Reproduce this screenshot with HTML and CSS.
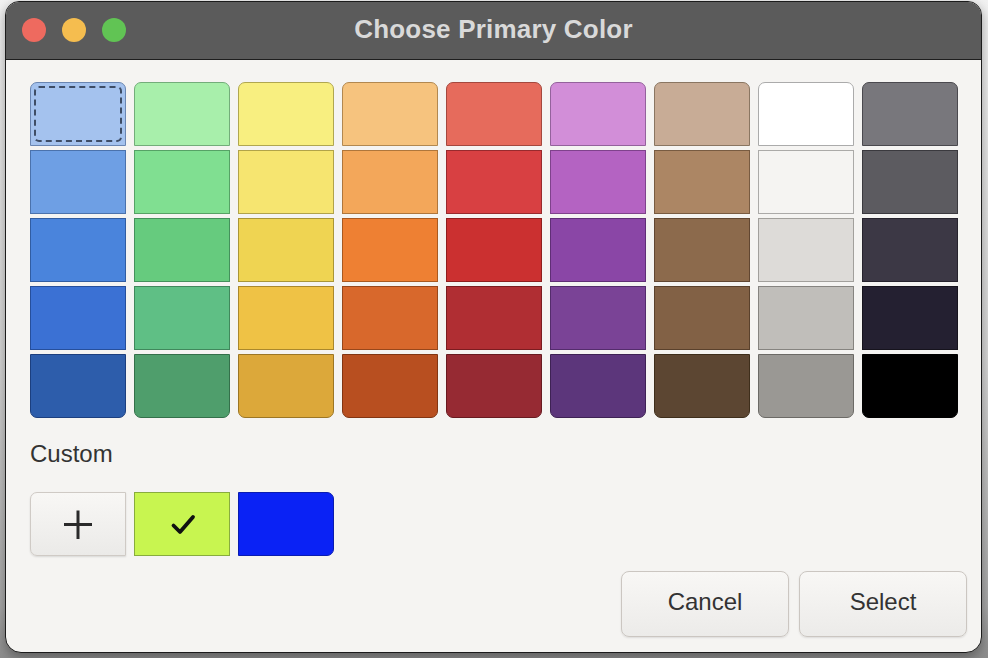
FILE: index.html
```html
<!DOCTYPE html>
<html>
<head>
<meta charset="utf-8">
<link rel="stylesheet" href="styles.css">
</head>
<body>
<div class="window">
  <div class="titlebar">
    <div class="lights">
      <span class="light red"></span>
      <span class="light yellow"></span>
      <span class="light green"></span>
    </div>
    <div class="title">Choose Primary Color</div>
  </div>
  <div class="content">
    <div class="grid">
      <div class="sw focused" style="--c:#a4c2ee;--b:#6a86b2"><span class="focus"></span></div>
      <div class="sw" style="--c:#a8efab;--b:#73ad7a"></div>
      <div class="sw" style="--c:#f8ef80;--b:#b0a750"></div>
      <div class="sw" style="--c:#f6c37e;--b:#b28850"></div>
      <div class="sw" style="--c:#e66b5c;--b:#a4483e"></div>
      <div class="sw" style="--c:#d28ed8;--b:#94629c"></div>
      <div class="sw" style="--c:#c8ac96;--b:#8a7662"></div>
      <div class="sw" style="--c:#ffffff;--b:#ababab"></div>
      <div class="sw" style="--c:#78777c;--b:#4a494e"></div>

      <div class="sw" style="--c:#6e9fe4;--b:#4b72ac"></div>
      <div class="sw" style="--c:#80df91;--b:#56a266"></div>
      <div class="sw" style="--c:#f6e570;--b:#b1a349"></div>
      <div class="sw" style="--c:#f3a75a;--b:#af763b"></div>
      <div class="sw" style="--c:#d84042;--b:#982a2d"></div>
      <div class="sw" style="--c:#b463c2;--b:#7f428c"></div>
      <div class="sw" style="--c:#ac8664;--b:#785b41"></div>
      <div class="sw" style="--c:#f5f4f2;--b:#abaaa8"></div>
      <div class="sw" style="--c:#5c5b60;--b:#3a393e"></div>

      <div class="sw" style="--c:#4a84dc;--b:#315da2"></div>
      <div class="sw" style="--c:#66cb7e;--b:#44915c"></div>
      <div class="sw" style="--c:#efd452;--b:#a99636"></div>
      <div class="sw" style="--c:#ee8033;--b:#a95920"></div>
      <div class="sw" style="--c:#cb3030;--b:#8f1e1e"></div>
      <div class="sw" style="--c:#8a46a6;--b:#602e76"></div>
      <div class="sw" style="--c:#8c6a4c;--b:#614631"></div>
      <div class="sw" style="--c:#dddbd8;--b:#a2a09c"></div>
      <div class="sw" style="--c:#3c3845;--b:#26232d"></div>

      <div class="sw" style="--c:#3b71d4;--b:#264f9c"></div>
      <div class="sw" style="--c:#5fbf85;--b:#40885c"></div>
      <div class="sw" style="--c:#efc245;--b:#aa882c"></div>
      <div class="sw" style="--c:#d8682c;--b:#98471b"></div>
      <div class="sw" style="--c:#b02e33;--b:#7b1c20"></div>
      <div class="sw" style="--c:#7a4396;--b:#542c6c"></div>
      <div class="sw" style="--c:#826145;--b:#5a412c"></div>
      <div class="sw" style="--c:#c0beba;--b:#868480"></div>
      <div class="sw" style="--c:#242031;--b:#16131d"></div>

      <div class="sw" style="--c:#2d5dab;--b:#1c3f7f"></div>
      <div class="sw" style="--c:#4f9e6c;--b:#34704a"></div>
      <div class="sw" style="--c:#dca83a;--b:#9c7624"></div>
      <div class="sw" style="--c:#b84f20;--b:#823512"></div>
      <div class="sw" style="--c:#962a33;--b:#681a20"></div>
      <div class="sw" style="--c:#5c367b;--b:#3e2254"></div>
      <div class="sw" style="--c:#5c4632;--b:#3e2e1b"></div>
      <div class="sw" style="--c:#9a9894;--b:#6c6a66"></div>
      <div class="sw" style="--c:#000000;--b:#000000"></div>
    </div>

    <div class="custom-label">Custom</div>

    <div class="custom-row">
      <div class="add">
        <svg width="30" height="30" viewBox="0 0 30 30"><path d="M15 1.5V30M1 15.5H29" stroke="#2a2a2a" stroke-width="3" fill="none"/></svg>
      </div>
      <div class="csw lime">
        <svg width="26" height="26" viewBox="0 0 26 26"><path d="M3.5 14.5L10 21L23 6" stroke="#111" stroke-width="3.8" fill="none" stroke-linecap="round" stroke-linejoin="round"/></svg>
      </div>
      <div class="csw blue"></div>
    </div>

    <div class="actions">
      <button class="btn">Cancel</button>
      <button class="btn">Select</button>
    </div>
  </div>
</div>
</body>
</html>
```

FILE: styles.css
```css
html, body {
  margin: 0;
  padding: 0;
}
body {
  width: 988px;
  height: 658px;
  overflow: hidden;
  background: linear-gradient(180deg, #f2f2f2 0%, #d6d6d6 55%, #a8a8a8 92%, #8c8c8c 100%);
  font-family: "Liberation Sans", Arial, sans-serif;
  padding-top: 1px;
  box-sizing: border-box;
}
.window {
  margin-left: 5px;
  width: 977px;
  height: 652px;
  box-sizing: border-box;
  border: 1px solid #1c1c1c;
  border-radius: 14px 14px 16px 16px;
  overflow: hidden;
  background: #f5f4f2;
  display: flex;
  flex-direction: column;
  box-shadow: 0 4px 12px rgba(0,0,0,0.35);
}
.titlebar {
  height: 57px;
  flex: none;
  background: #5b5b5b;
  border-bottom: 1px solid #1e1e1e;
  display: flex;
  align-items: center;
  justify-content: center;
  position: relative;
}
.lights {
  position: absolute;
  left: 16px;
  top: 16px;
  display: flex;
  gap: 16px;
}
.light {
  width: 24px;
  height: 24px;
  border-radius: 50%;
  display: block;
}
.red { background: #ee6a5f; }
.yellow { background: #f5bd4f; }
.green { background: #61c454; }
.title {
  color: #d9d9d9;
  font-weight: bold;
  font-size: 26px;
  letter-spacing: 0.2px;
  margin-top: -3px;
}
.content {
  flex: 1;
  display: flex;
  flex-direction: column;
  padding: 22px 14px 0 24px;
}
.grid {
  display: grid;
  grid-template-columns: repeat(9, 96px);
  grid-auto-rows: 64px;
  column-gap: 8px;
  row-gap: 4px;
}
.sw {
  background: var(--c);
  border: 1px solid var(--b);
  box-sizing: border-box;
  position: relative;
}
.sw:nth-child(-n+9) {
  border-radius: 7px 7px 0 0;
}
.sw:nth-last-child(-n+9) {
  border-radius: 0 0 7px 7px;
}
.focus {
  position: absolute;
  left: 3px;
  top: 3px;
  right: 3px;
  bottom: 3px;
  border: 2px dashed #3e4d66;
  border-radius: 5px;
}
.custom-label {
  margin-top: 22px;
  font-size: 24px;
  line-height: 28px;
  color: #333;
}
.custom-row {
  margin-top: 24px;
  display: flex;
  gap: 8px;
  height: 64px;
}
.add, .csw {
  width: 96px;
  height: 64px;
  box-sizing: border-box;
  display: flex;
  align-items: center;
  justify-content: center;
}
.add {
  background: linear-gradient(180deg, #f8f7f5, #ebeae8);
  border: 1px solid #cfcac5;
  border-radius: 7px 0 0 7px;
  box-shadow: 0 1px 2px rgba(0,0,0,0.12);
}
.lime {
  background: #c8f550;
  border: 1px solid #88ac3e;
}
.lime svg { margin-left: 1px; margin-top: -1px; }
.blue {
  background: #0a22f5;
  border: 1px solid #0a1cb0;
  border-radius: 0 7px 7px 0;
}
.actions {
  margin-top: 15px;
  display: flex;
  justify-content: flex-end;
  gap: 10px;
}
.btn {
  width: 168px;
  height: 66px;
  box-sizing: border-box;
  border: 1px solid #cbc6c1;
  border-radius: 8px;
  background: linear-gradient(180deg, #f8f7f5, #ecebe9);
  box-shadow: 0 1px 2px rgba(0,0,0,0.1);
  font-family: "Liberation Sans", Arial, sans-serif;
  font-size: 24px;
  color: #333;
  padding: 0 0 4px 0;
}
```
